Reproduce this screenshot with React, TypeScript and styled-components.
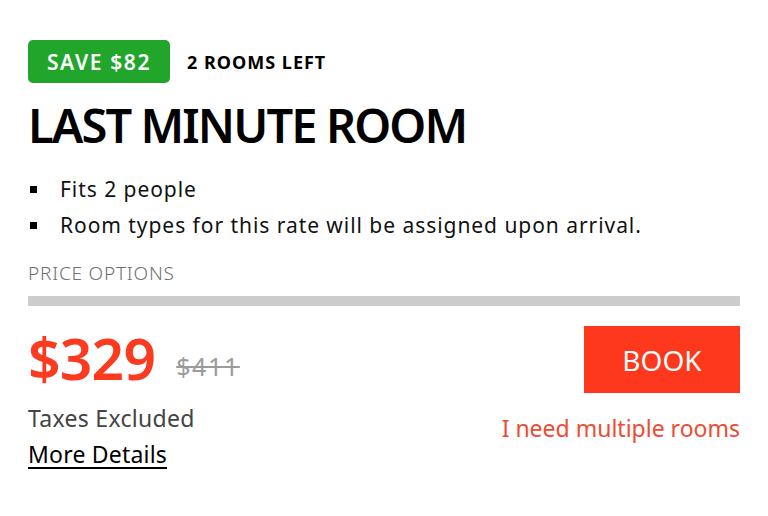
import React from "react";
import styled, { createGlobalStyle } from "styled-components";

const GlobalStyle = createGlobalStyle`
  html, body {
    margin: 0;
    padding: 0;
    background: #fff;
  }
  body {
    font-family: "Noto Sans", "Open Sans", sans-serif;
    color: #000;
  }
`;

const Card = styled.div`
  padding: 40px 28px 0 28px;
  width: 768px;
  box-sizing: border-box;
`;

const TagRow = styled.div`
  display: flex;
  align-items: center;
  gap: 17px;
`;

const SaveBadge = styled.span`
  display: inline-flex;
  align-items: center;
  justify-content: center;
  height: 43px;
  width: 142px;
  background: #21a52b;
  color: #fff;
  border-radius: 5px;
  font-size: 21px;
  font-weight: 600;
  letter-spacing: 1.6px;
`;

const RoomsLeft = styled.span`
  font-size: 18px;
  font-weight: 700;
  letter-spacing: 1px;
`;

const Title = styled.h1`
  margin: 14px 0 0 0;
  font-size: 47px;
  line-height: 56px;
  font-weight: 600;
  letter-spacing: -1.9px;
`;

const Features = styled.ul`
  list-style: none;
  margin: 18px 0 0 0;
  padding: 0;
`;

const Feature = styled.li`
  display: flex;
  align-items: center;
  font-size: 21px;
  line-height: 36px;
  color: #111;
  letter-spacing: 0.95px;

  &::before {
    content: "";
    width: 7px;
    height: 7px;
    background: #000;
    margin: 0 23px 0 2px;
    flex-shrink: 0;
  }
`;

const SectionLabel = styled.div`
  margin-top: 18px;
  font-size: 19px;
  font-weight: 300;
  color: #707070;
  line-height: 24px;
  letter-spacing: 0.8px;
`;

const Divider = styled.div`
  margin-top: 11px;
  height: 10px;
  background: #cccccc;
`;

const PriceRow = styled.div`
  display: flex;
  justify-content: space-between;
  align-items: flex-start;
  margin-top: 20px;
`;

const PriceCol = styled.div`
  display: flex;
  flex-direction: column;
`;

const Prices = styled.div`
  display: flex;
  align-items: flex-start;
  gap: 21px;
`;

const Price = styled.span`
  font-size: 57px;
  font-weight: 600;
  color: #fb3a1f;
  line-height: 64px;
  letter-spacing: -0.8px;
`;

const OldPrice = styled.span`
  margin-top: 25px;
  font-size: 25px;
  line-height: 30px;
  color: #9b9b9b;
  letter-spacing: 1.6px;
  text-decoration: line-through;
  text-decoration-thickness: 2px;
`;

const Note = styled.div`
  margin-top: 10px;
  font-size: 23px;
  color: #444;
  line-height: 36px;
  letter-spacing: 0.3px;
`;

const DetailsLink = styled.a`
  font-size: 23px;
  color: #000;
  line-height: 36px;
  letter-spacing: 0.2px;
  text-decoration: underline;
  text-decoration-thickness: 2px;
  text-underline-offset: 4px;
  cursor: pointer;
`;

const ActionCol = styled.div`
  display: flex;
  flex-direction: column;
  align-items: flex-end;
`;

const BookButton = styled.button`
  width: 156px;
  height: 67px;
  border: none;
  padding: 0;
  background: #fd381d;
  color: #fff;
  font-family: inherit;
  font-size: 28px;
  font-weight: 400;
  cursor: pointer;
`;

const MultiLink = styled.a`
  margin-top: 20px;
  font-size: 23px;
  line-height: 30px;
  color: #f04a32;
  cursor: pointer;
`;

export default function App() {
  return (
    <>
      <GlobalStyle />
      <Card>
        <TagRow>
          <SaveBadge>SAVE $82</SaveBadge>
          <RoomsLeft>2 ROOMS LEFT</RoomsLeft>
        </TagRow>
        <Title>LAST MINUTE ROOM</Title>
        <Features>
          <Feature>Fits 2 people</Feature>
          <Feature>Room types for this rate will be assigned upon arrival.</Feature>
        </Features>
        <SectionLabel>PRICE OPTIONS</SectionLabel>
        <Divider />
        <PriceRow>
          <PriceCol>
            <Prices>
              <Price>$329</Price>
              <OldPrice>$411</OldPrice>
            </Prices>
            <Note>Taxes Excluded</Note>
            <div>
              <DetailsLink>More Details</DetailsLink>
            </div>
          </PriceCol>
          <ActionCol>
            <BookButton>BOOK</BookButton>
            <MultiLink>I need multiple rooms</MultiLink>
          </ActionCol>
        </PriceRow>
      </Card>
    </>
  );
}
